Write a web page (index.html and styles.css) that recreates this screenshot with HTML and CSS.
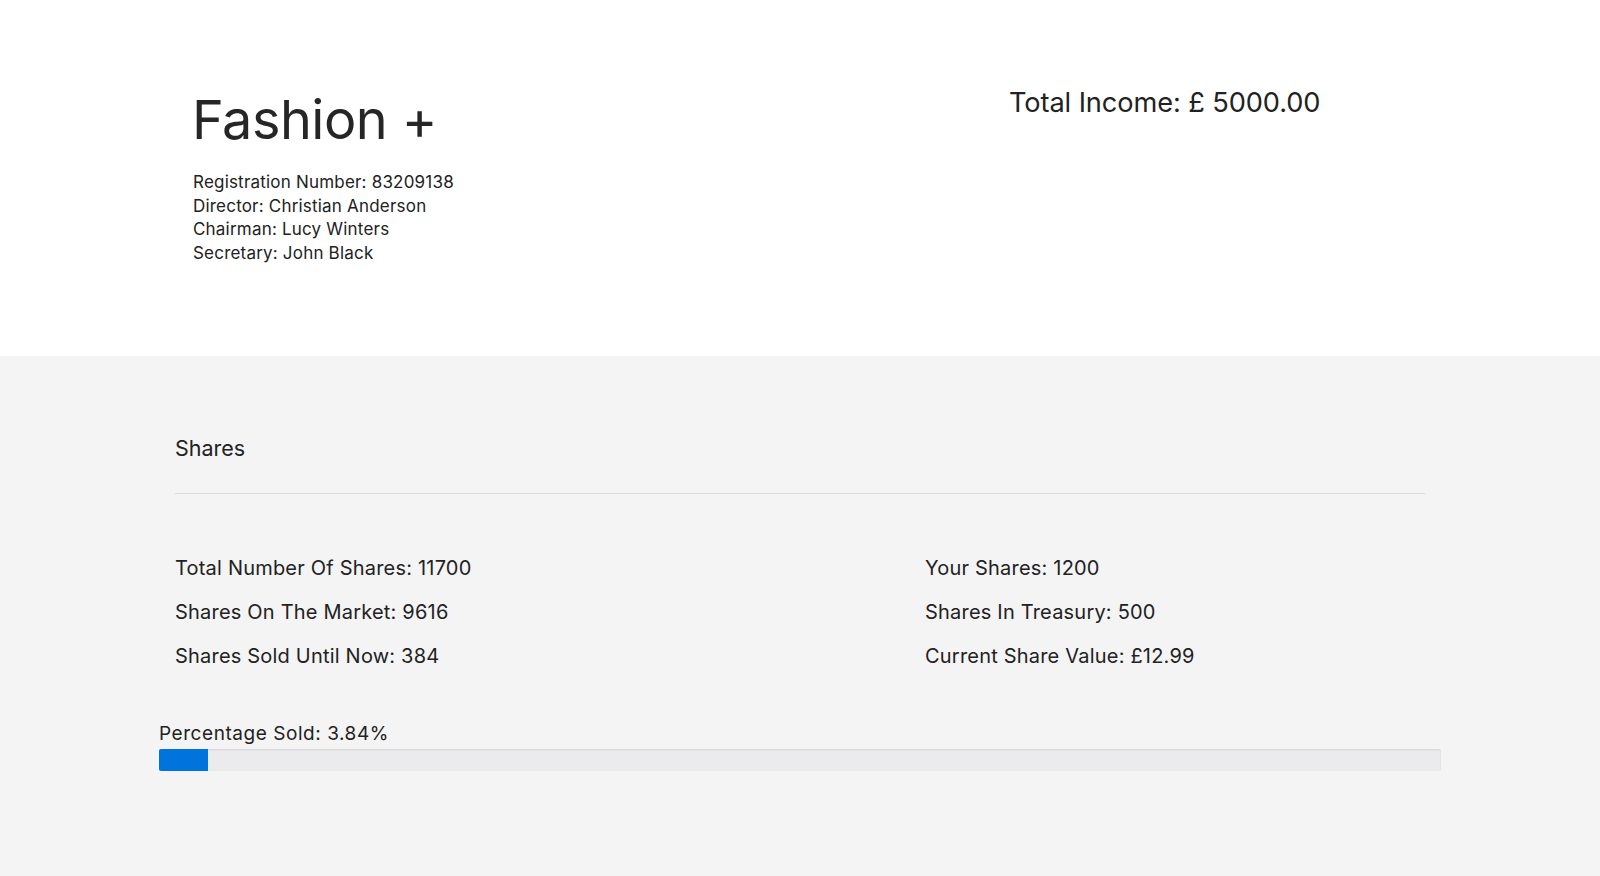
FILE: index.html
```html
<!DOCTYPE html>
<html>
<head>
<meta charset="utf-8">
<link rel="stylesheet" href="styles.css">
</head>
<body>
<header class="company">
  <div class="company-inner">
    <div class="company-info">
      <h1 class="company-name">Fashion +</h1>
      <div class="company-details">
        <div>Registration Number: 83209138</div>
        <div>Director: Christian Anderson</div>
        <div>Chairman: Lucy Winters</div>
        <div>Secretary: John Black</div>
      </div>
    </div>
    <div class="income">Total Income: £ 5000.00</div>
  </div>
</header>
<section class="shares">
  <div class="shares-inner">
    <h2 class="shares-title">Shares</h2>
    <hr class="divider">
    <div class="stats">
      <div class="stats-col">
        <p>Total Number Of Shares: 11700</p>
        <p>Shares On The Market: 9616</p>
        <p>Shares Sold Until Now: 384</p>
      </div>
      <div class="stats-col">
        <p>Your Shares: 1200</p>
        <p>Shares In Treasury: 500</p>
        <p>Current Share Value: £12.99</p>
      </div>
    </div>
  </div>
  <div class="progress-wrap">
    <div class="progress-label">Percentage Sold: 3.84%</div>
    <div class="progress"><div class="progress-fill" style="width: 3.84%"></div></div>
  </div>
</section>
</body>
</html>
```
FILE: styles.css
```css
html, body {
  margin: 0;
  padding: 0;
  height: 100%;
}
body {
  font-family: Inter, "Noto Sans", sans-serif;
  color: #222;
  background: #f4f4f4;
}
.company {
  background: #fff;
  height: 356px;
  box-sizing: border-box;
}
.company-inner {
  display: flex;
  padding-left: 192px;
  padding-top: 84px;
}
.company-info {
  width: 817px;
}
.company-name {
  margin: 0;
  font-size: 54px;
  font-weight: 400;
  line-height: 72px;
  letter-spacing: -0.5px;
  color: #262626;
}
.company-details {
  margin-top: 15px;
  padding-left: 1px;
  font-size: 17px;
  line-height: 23.5px;
  letter-spacing: 0.2px;
}
.income {
  font-size: 27.2px;
  line-height: 34px;
  margin-top: 2px;
  letter-spacing: -0.1px;
}
.shares {
  padding-top: 76px;
}
.shares-inner {
  width: 1250px;
  margin: 0 auto;
}
.shares-title {
  margin: 0;
  font-size: 21.5px;
  font-weight: 400;
  line-height: 32px;
}
.divider {
  margin: 29px 0 0;
  border: 0;
  border-top: 1px solid #dcdcdc;
  height: 0;
}
.stats {
  display: flex;
  padding-top: 61px;
}
.stats-col {
  flex: 0 0 750px;
}
.stats-col + .stats-col {
  flex: 1;
}
.stats-col p {
  margin: 0 0 18px;
  font-size: 20px;
  line-height: 26px;
  letter-spacing: 0.2px;
}
.progress-wrap {
  width: 1282px;
  margin: 35px auto 0;
}
.progress-label {
  font-size: 19px;
  line-height: 24px;
  letter-spacing: 0.55px;
  margin-bottom: 3px;
}
.progress {
  height: 22px;
  background: #ebebed;
  border-radius: 2px;
  box-shadow: inset 0 1px 2px rgba(0,0,0,0.1);
  overflow: hidden;
}
.progress-fill {
  height: 100%;
  background: #0073dc;
}
```
